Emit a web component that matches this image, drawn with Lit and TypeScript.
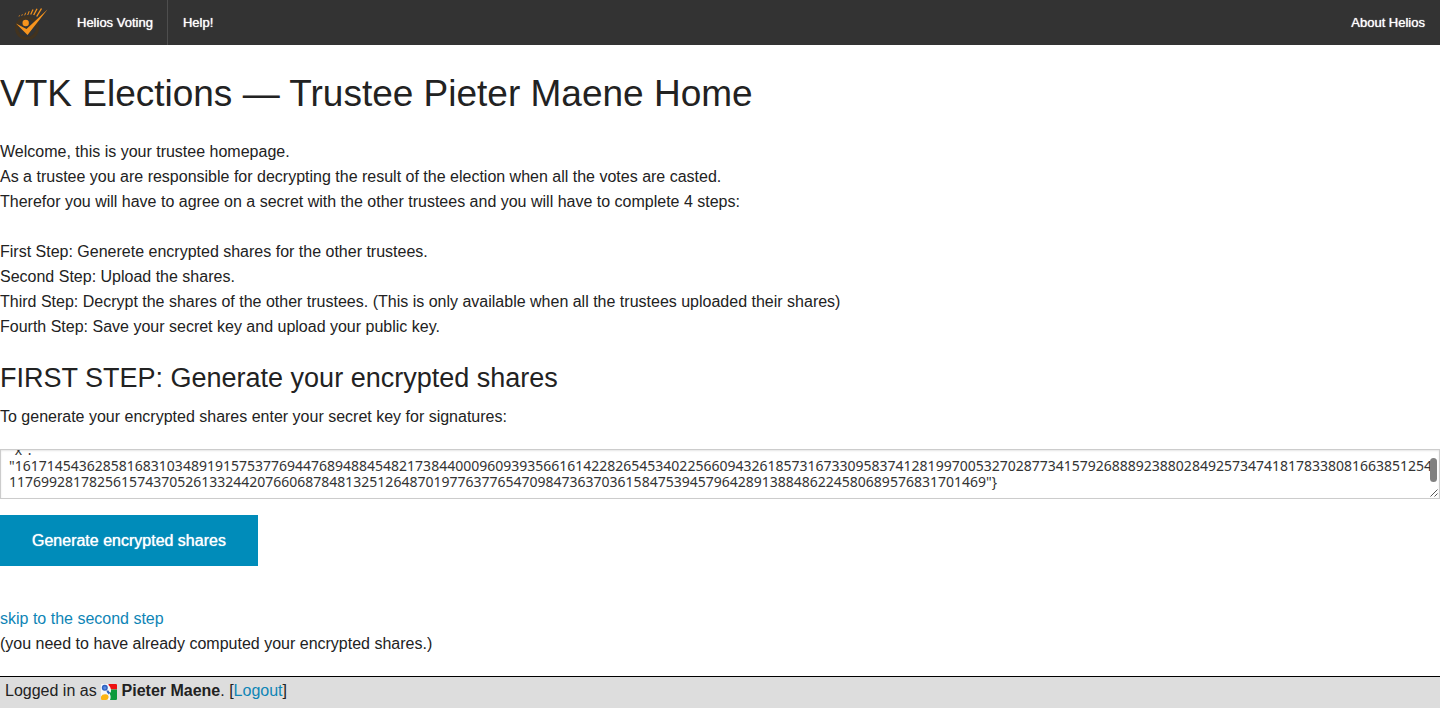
import { LitElement, html, css, svg } from "lit";
import { customElement, query } from "lit/decorators.js";

const SECRET_KEY = [
  "{",
  '"x":',
  '"161714543628581683103489191575377694476894884548217384400096093935661614228265453402256609432618573167330958374128199700532702877341579268889238802849257347418178338081663851254',
  '11769928178256157437052613324420766068784813251264870197763776547098473637036158475394579642891388486224580689576831701469"}',
].join("\n");

const heliosLogo = html`<svg class="logo" viewBox="0 0 38 38" aria-hidden="true">
  ${svg`
    <circle cx="15" cy="24" r="10.5" fill="none" stroke="#42331f" stroke-width="3"/>
    <circle cx="13.700" cy="19" r="3.200" fill="#f7941d"/>
    <path d="M4 19.500L14.500 25L35.500 5.500L15.500 31Z" fill="#f7941d"/>
    <g stroke="#f7941d" fill="none">
      <path d="M7 12.500l.5 -1.200" stroke-width=".8"/>
      <path d="M9.700 11.800l.7 -1.600" stroke-width=".8"/>
      <path d="M12.700 11.300l1 -2.600" stroke-width=".9"/>
      <path d="M15.700 11l1.500 -3.800" stroke-width="1"/>
      <path d="M18.700 10.500l2.300 -5" stroke-width="1.200"/>
      <path d="M21.700 11l3.300 -6.200" stroke-width="1.300"/>
      <path d="M24.700 12.500l4.800 -8" stroke-width="1.400"/>
    </g>`}
</svg>`;

const googleIcon = html`<svg class="google" viewBox="0 0 16 16" aria-label="Google">
  ${svg`
    <rect width="16" height="16" rx="1" fill="#f6f8fc"/>
    <path d="M7.500 0H15a1 1 0 0 1 1 1V5.500H10Q9.500 2.500 7.500 1Z" fill="#ee1111"/>
    <path d="M10 5.500H16V15a1 1 0 0 1 -1 1H9Q10.500 12.500 8.500 9.500Q10.500 8 10 5.500Z" fill="#0c9a3c"/>
    <circle cx="3.800" cy="3.800" r="2.300" fill="#5b8ae0" stroke="#2f63c0" stroke-width="1.400"/>
    <path d="M6.500 6.500Q6.500 8 8.500 9.500" fill="none" stroke="#2f63c0" stroke-width="2.200"/>
    <path d="M0 12.500Q1 10 4.500 10.200Q8 10.500 7.500 13.500Q7 16 5 16H1Q0 16 0 15Z" fill="#fbb516"/>`}
</svg>`;

@customElement("app-root")
export class AppRoot extends LitElement {
  static styles = css`
    :host {
      display: flex;
      flex-direction: column;
      min-height: 100vh;
      background: #fff;
      color: #222;
      font: 16px/25px "Liberation Sans", Arial, sans-serif;
    }
    a {
      color: #0e85b6;
      text-decoration: none;
    }
    .bar {
      display: flex;
      align-items: stretch;
      height: 45px;
      background: #333;
    }
    .bar a {
      display: flex;
      align-items: center;
      padding: 0 15px;
      color: #fff;
      font-size: 13px;
      line-height: 45px;
      text-shadow: 0 0 1px #fff;
    }
    .bar .brand {
      padding: 0 12px;
    }
    .bar .divided {
      padding-right: 14px;
      border-right: 1px solid #4e4e4e;
    }
    .spacer {
      flex: 1;
    }
    .logo {
      width: 38px;
      height: 38px;
    }
    main {
      flex: 1;
    }
    h1,
    h2 {
      margin: 0;
      font-weight: normal;
    }
    h1 {
      margin: 23px 0 19px;
      font-size: 37px;
      line-height: 52px;
    }
    h2 {
      margin: 0 0 12px;
      font-size: 27px;
      line-height: 28px;
    }
    p {
      margin: 0 0 25px;
    }
    label {
      display: block;
    }
    .field {
      position: relative;
      margin: 20px 0 16px;
    }
    textarea {
      display: block;
      box-sizing: border-box;
      width: 100%;
      height: 50px;
      margin: 0;
      padding: 8px;
      border: 1px solid #ccc;
      border-radius: 0;
      box-shadow: inset 0 1px 2px rgba(0, 0, 0, 0.1);
      color: #333;
      font: 14px/16px "Noto Sans", "Liberation Sans", sans-serif;
      white-space: pre;
      overflow-x: hidden;
      overflow-y: scroll;
      scrollbar-width: none;
      resize: none;
    }
    .thumb {
      position: absolute;
      top: 9px;
      right: 3px;
      width: 7px;
      height: 24px;
      border-radius: 4px;
      background: #808080;
    }
    .grip {
      position: absolute;
      right: 2px;
      bottom: 2px;
      width: 8px;
      height: 8px;
    }
    button {
      display: block;
      margin: 0 0 40px;
      padding: 13px 32px;
      border: 0;
      background: #008cba;
      color: #fff;
      font: 16px/25px "Liberation Sans", Arial, sans-serif;
      text-shadow: 0 0 1px #fff;
    }
    .skip {
      margin: 0 0 20px;
    }
    footer {
      box-sizing: border-box;
      height: 32px;
      padding: 1px 5px 5px;
      border-top: 1px solid #000;
      background: #ddd;
    }
    .google {
      width: 16px;
      height: 16px;
      vertical-align: -4px;
    }
  `;

  @query("textarea") private keyField!: HTMLTextAreaElement;

  firstUpdated() {
    this.keyField.scrollTop = this.keyField.scrollHeight;
  }

  render() {
    return html`
      <nav class="bar">
        <a class="brand" href="#" aria-label="Helios">${heliosLogo}</a>
        <a class="divided" href="#">Helios Voting</a>
        <a href="#">Help!</a>
        <span class="spacer"></span>
        <a href="#">About Helios</a>
      </nav>
      <main>
        <h1>VTK Elections — Trustee Pieter Maene Home</h1>
        <p>
          Welcome, this is your trustee homepage.<br />
          As a trustee you are responsible for decrypting the result of the election when all the votes are casted.<br />
          Therefor you will have to agree on a secret with the other trustees and you will have to complete 4 steps:
        </p>
        <p>
          First Step: Generete encrypted shares for the other trustees.<br />
          Second Step: Upload the shares.<br />
          Third Step: Decrypt the shares of the other trustees. (This is only available when all the trustees uploaded their shares)<br />
          Fourth Step: Save your secret key and upload your public key.
        </p>
        <h2>FIRST STEP: Generate your encrypted shares</h2>
        <label for="key">To generate your encrypted shares enter your secret key for signatures:</label>
        <div class="field">
          <textarea id="key" spellcheck="false" .value=${SECRET_KEY}></textarea>
          <span class="thumb"></span>
          <svg class="grip" viewBox="0 0 8 8" aria-hidden="true">
            <path d="M0.500 7.500L7.500 0.500M4.500 7.500L7.500 4.500" stroke="#555" fill="none" />
          </svg>
        </div>
        <button type="button">Generate encrypted shares</button>
        <p class="skip">
          <a href="#">skip to the second step</a><br />
          (you need to have already computed your encrypted shares.)
        </p>
      </main>
      <footer>
        Logged in as ${googleIcon} <strong>Pieter Maene</strong>. [<a href="#">Logout</a>]
      </footer>
    `;
  }
}
